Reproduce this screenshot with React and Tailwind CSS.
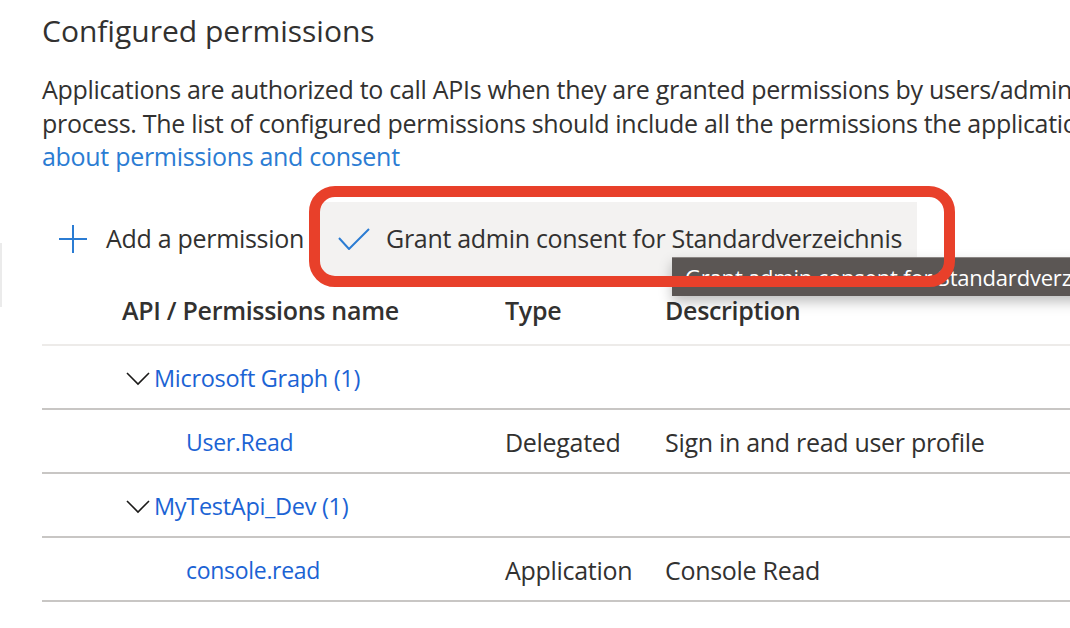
import React from 'react'

const font = { fontFamily: '"Open Sans", "Noto Sans", sans-serif' }

function Chevron() {
  return (
    <svg width="24" height="14" viewBox="0 0 24 14" className="shrink-0">
      <path d="M1 1 L12 12 L23 1" fill="none" stroke="#1b1a19" strokeWidth="1.6" />
    </svg>
  )
}

const rows = [
  { type: 'group', name: 'Microsoft Graph (1)' },
  { type: 'perm', name: 'User.Read', kind: 'Delegated', desc: 'Sign in and read user profile' },
  { type: 'group', name: 'MyTestApi_Dev (1)' },
  { type: 'perm', name: 'console.read', kind: 'Application', desc: 'Console Read' },
]

export default function App() {
  return (
    <div className="relative w-[1070px] h-[628px] overflow-hidden bg-white text-[#323130]" style={font}>
      <div className="pl-[42px] pt-[8px]">
        <h1 className="text-[30px] leading-[46px] whitespace-nowrap">Configured permissions</h1>

        <div className="mt-[19px] text-[25px] leading-[33.5px] tracking-[-0.3px] whitespace-nowrap">
          <div>Applications are authorized to call APIs when they are granted permissions by users/admins as part of the consent</div>
          <div>
            process. The list of configured permissions should include all the permissions the application needs.{' '}
            <span className="text-[#2b7cd3]">Learn more</span>
          </div>
          <div className="text-[#2b7cd3]">about permissions and consent</div>
        </div>

        <div className="mt-[28px] flex items-center h-[74px]">
          <div className="flex items-center pl-[16px] h-full">
            <svg width="30" height="30" viewBox="0 0 30 30">
              <path d="M15 1 V29 M1 15 H29" stroke="#2b7cd3" strokeWidth="2" />
            </svg>
            <span className="ml-[18px] text-[25px] tracking-[-0.3px] whitespace-nowrap">Add a permission</span>
          </div>
          <div className="flex items-center h-full w-[601px] bg-[#f3f2f1] pl-[22px] ml-[12px]">
            <svg width="32" height="22" viewBox="0 0 32 22">
              <path d="M1 10 L11 21 L31 1" fill="none" stroke="#2b7cd3" strokeWidth="2" />
            </svg>
            <span className="ml-[16px] text-[25px] tracking-[-0.3px] whitespace-nowrap">Grant admin consent for Standardverzeichnis</span>
          </div>
        </div>

        <div className="grid grid-cols-[463px_160px_1fr] h-[70px] pt-[2px] items-center border-b-2 border-[#edebe9] text-[25px] font-semibold tracking-[-0.3px] whitespace-nowrap">
          <div className="pl-[80px]">API / Permissions name</div>
          <div>Type</div>
          <div>Description</div>
        </div>

        {rows.map((r, i) => (
          <div
            key={i}
            className="grid grid-cols-[463px_160px_1fr] h-[64px] pt-[4px] items-center border-b-2 border-[#c8c6c4] text-[25px] tracking-[-0.3px] whitespace-nowrap"
          >
            {r.type === 'group' ? (
              <div className="flex items-center pl-[84px] text-[#1b63d4]">
                <Chevron />
                <span className="ml-[4px] text-[23.5px]">{r.name}</span>
              </div>
            ) : (
              <div className="pl-[144px] text-[#1b63d4] text-[23px]">{r.name}</div>
            )}
            <div>{r.kind}</div>
            <div>{r.desc}</div>
          </div>
        ))}
      </div>

      {/* tooltip */}
      <div className="absolute left-[672px] top-[257px] h-[39px] w-[420px] bg-[#5b5654] border-t border-[#8a8583] shadow-[0_6px_12px_rgba(0,0,0,0.25)] pl-[13px] text-white text-[22px] leading-[38px] tracking-[-0.2px] whitespace-nowrap overflow-hidden">
        Grant admin consent for Standardverzeichnis
      </div>

      {/* annotation */}
      <div className="absolute left-[309px] top-[186px] w-[646px] h-[101px] border-[11px] border-[#e8402a] rounded-[26px]" />

      <div className="absolute left-0 top-[243px] w-[2px] h-[64px] bg-[#ebebeb]" />
    </div>
  )
}
